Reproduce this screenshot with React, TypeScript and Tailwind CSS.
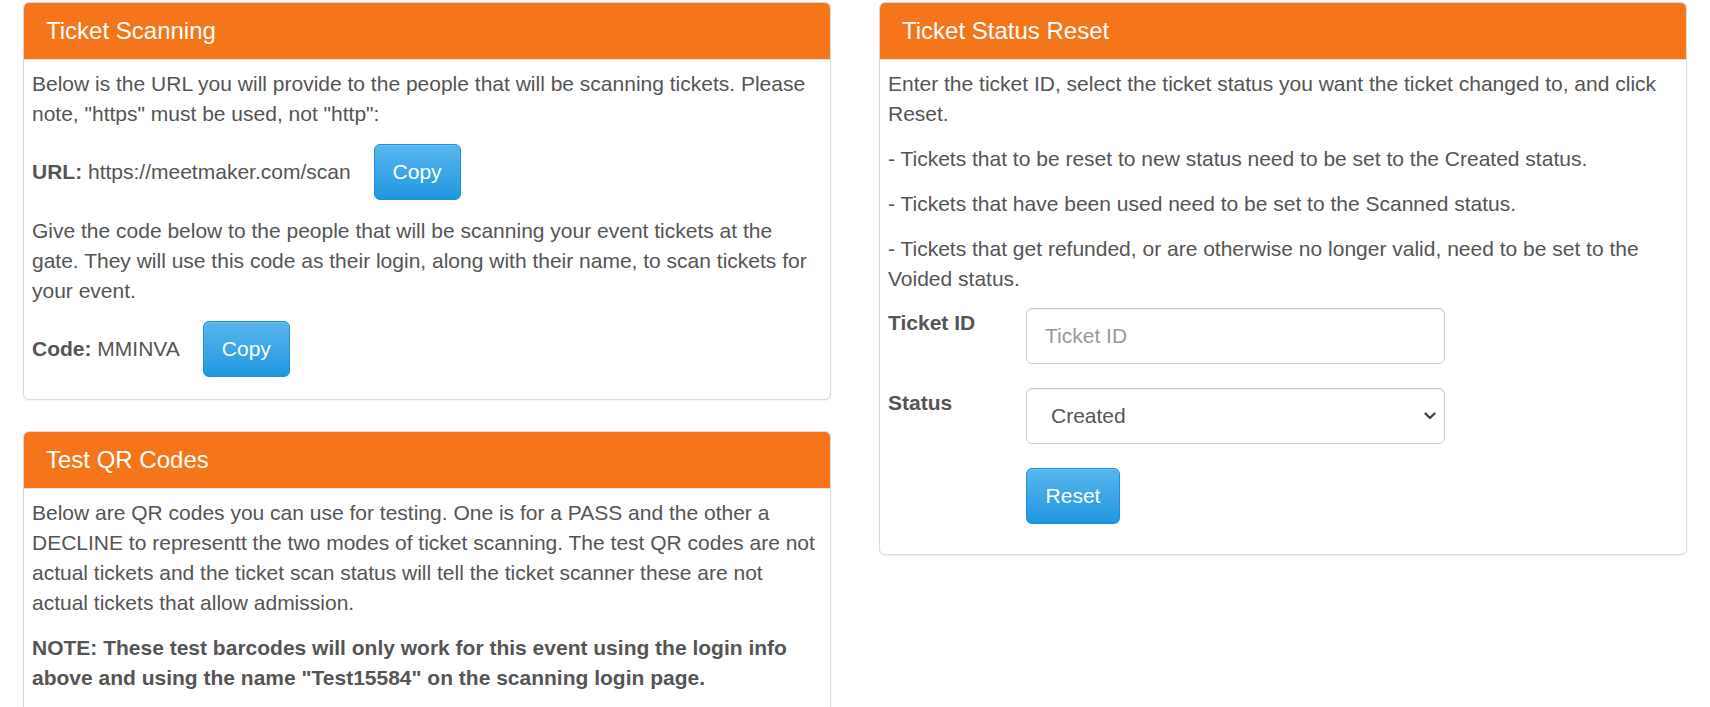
import React from "react";

function Panel({ title, children, className = "" }: { title: string; children: React.ReactNode; className?: string }) {
  return (
    <div className={"rounded-[6px] border border-[#dadada] bg-white shadow-[0_1px_2px_rgba(0,0,0,0.06)] overflow-hidden " + className}>
      <div className="h-[57px] bg-[#f5761a] border-b border-[#e2e2e2] px-[22px] flex items-center text-white text-[24px] leading-[26px]">
        {title}
      </div>
      {children}
    </div>
  );
}

function BlueButton({ children, className = "" }: { children: React.ReactNode; className?: string }) {
  return (
    <button
      type="button"
      className={
        "h-[56px] px-[18px] rounded-[6px] border border-[#1c8fd8] bg-gradient-to-b from-[#57b6ee] to-[#1e96e1] text-white text-[21px] leading-[30px] shadow-[inset_0_1px_0_rgba(255,255,255,0.15)] " +
        className
      }
    >
      {children}
    </button>
  );
}

export default function App() {
  return (
    <div className="min-h-[760px] bg-white font-['Liberation_Sans',Arial,sans-serif] text-[21px] leading-[30px] text-[#555]">
      <div className="flex gap-[48px] px-[23px] pt-[2px]">
        <div className="w-[808px] flex flex-col gap-[31px]">
          <Panel title="Ticket Scanning">
            <div className="px-[8px] pt-[9px] pb-[22px]">
              <p className="mb-[15px]">
                Below is the URL you will provide to the people that will be scanning tickets. Please note, "https" must be used, not "http":
              </p>
              <div className="flex items-center gap-[23px] mb-[16px]">
                <span>
                  <b>URL:</b> https://meetmaker.com/scan
                </span>
                <BlueButton>Copy</BlueButton>
              </div>
              <p className="mb-[15px]">
                Give the code below to the people that will be scanning your event tickets at the gate. They will use this code as their login, along with their name, to scan tickets for your event.
              </p>
              <div className="flex items-center gap-[23px]">
                <span>
                  <b>Code:</b> MMINVA
                </span>
                <BlueButton>Copy</BlueButton>
              </div>
            </div>
          </Panel>
          <Panel title="Test QR Codes">
            <div className="px-[8px] pt-[9px] pb-[22px]">
              <p className="mb-[15px]">
                Below are QR codes you can use for testing. One is for a PASS and the other a DECLINE to representt the two modes of ticket scanning. The test QR codes are not actual tickets and the ticket scan status will tell the ticket scanner these are not actual tickets that allow admission.
              </p>
              <p className="mb-[15px] font-bold">
                NOTE: These test barcodes will only work for this event using the login info above and using the name "Test15584" on the scanning login page.
              </p>
              <div className="h-[40px]" />
            </div>
          </Panel>
        </div>
        <div className="w-[808px]">
          <Panel title="Ticket Status Reset">
            <div className="px-[8px] pt-[9px] pb-[30px]">
              <p className="mb-[15px]">
                Enter the ticket ID, select the ticket status you want the ticket changed to, and click Reset.
              </p>
              <p className="mb-[15px]">- Tickets that to be reset to new status need to be set to the Created status.</p>
              <p className="mb-[15px]">- Tickets that have been used need to be set to the Scanned status.</p>
              <p className="mb-[14px]">
                - Tickets that get refunded, or are otherwise no longer valid, need to be set to the Voided status.
              </p>
              <div className="flex flex-col gap-[24px]">
                <div className="flex">
                  <label className="w-[138px] font-bold">Ticket ID</label>
                  <input
                    placeholder="Ticket ID"
                    className="w-[419px] h-[56px] rounded-[6px] border border-[#cccccc] px-[18px] text-[21px] text-[#555] placeholder:text-[#999] shadow-[inset_0_1px_1px_rgba(0,0,0,0.075)] outline-none"
                  />
                </div>
                <div className="flex">
                  <label className="w-[138px] font-bold">Status</label>
                  <div className="relative w-[419px] h-[56px] rounded-[6px] border border-[#cccccc] shadow-[inset_0_1px_1px_rgba(0,0,0,0.075)] flex items-center pl-[24px] text-[#555]">
                    <span>Created</span>
                    <svg className="absolute right-[8px] top-1/2 -translate-y-1/2" width="12" height="8" viewBox="0 0 12 8" fill="none">
                      <path d="M1.5 1.5 L6 6 L10.5 1.5" stroke="#444" strokeWidth="2.4" strokeLinecap="round" strokeLinejoin="round" />
                    </svg>
                  </div>
                </div>
                <div className="flex">
                  <div className="w-[138px]" />
                  <BlueButton className="w-[94px]">Reset</BlueButton>
                </div>
              </div>
            </div>
          </Panel>
        </div>
      </div>
    </div>
  );
}
